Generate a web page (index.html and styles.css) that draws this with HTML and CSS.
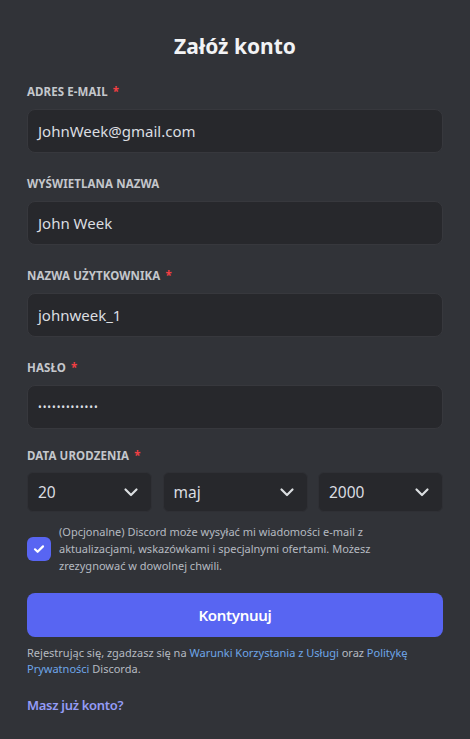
FILE: index.html
```html
<!DOCTYPE html>
<html lang="pl">
<head>
<meta charset="utf-8">
<title>Załóż konto</title>
<link rel="stylesheet" href="styles.css">
</head>
<body>
<main class="form">
  <h1 class="title">Załóż konto</h1>

  <div class="field">
    <label class="label">Adres e-mail <span class="req">*</span></label>
    <div class="input">JohnWeek@gmail.com</div>
  </div>

  <div class="field">
    <label class="label">Wyświetlana nazwa</label>
    <div class="input">John Week</div>
  </div>

  <div class="field">
    <label class="label">Nazwa użytkownika <span class="req">*</span></label>
    <div class="input">johnweek_1</div>
  </div>

  <div class="field field-last">
    <label class="label">Hasło <span class="req">*</span></label>
    <div class="input"><span class="dots">•••••••••••••</span></div>
  </div>

  <div class="field-date">
    <label class="label">Data urodzenia <span class="req">*</span></label>
    <div class="selects">
      <div class="select s-day"><span>20</span>
        <svg class="chev" width="16" height="16" viewBox="0 0 16 16"><path d="M2.5 5.5L8 11l5.5-5.5" fill="none" stroke="currentColor" stroke-width="2.2" stroke-linecap="round" stroke-linejoin="round"/></svg>
      </div>
      <div class="select s-month"><span>maj</span>
        <svg class="chev" width="16" height="16" viewBox="0 0 16 16"><path d="M2.5 5.5L8 11l5.5-5.5" fill="none" stroke="currentColor" stroke-width="2.2" stroke-linecap="round" stroke-linejoin="round"/></svg>
      </div>
      <div class="select s-year"><span>2000</span>
        <svg class="chev" width="16" height="16" viewBox="0 0 16 16"><path d="M2.5 5.5L8 11l5.5-5.5" fill="none" stroke="currentColor" stroke-width="2.2" stroke-linecap="round" stroke-linejoin="round"/></svg>
      </div>
    </div>
  </div>

  <div class="check-row">
    <div class="checkbox">
      <svg width="14" height="14" viewBox="0 0 14 14"><path d="M3 7.3l2.6 2.5L11 4.4" fill="none" stroke="#fff" stroke-width="2.2" stroke-linecap="round" stroke-linejoin="round"/></svg>
    </div>
    <p class="check-text">(Opcjonalne) Discord może wysyłać mi wiadomości e-mail z aktualizacjami, wskazówkami i specjalnymi ofertami. Możesz zrezygnować w dowolnej chwili.</p>
  </div>

  <button class="btn" type="button">Kontynuuj</button>

  <p class="terms">Rejestrując się, zgadzasz się na <a href="#">Warunki Korzystania z Usługi</a> oraz <a href="#">Politykę</a> <a href="#">Prywatności</a> Discorda.</p>

  <a class="login" href="#">Masz już konto?</a>
</main>
</body>
</html>
```

FILE: styles.css
```css
* { box-sizing: border-box; }

html, body {
  margin: 0;
  padding: 0;
  background: #313338;
}

body {
  font-family: "Noto Sans", "Open Sans", sans-serif;
  color: #dbdee1;
}

.form {
  padding: 31px 27px 0;
  display: flex;
  flex-direction: column;
}

.title {
  margin: 0 0 23px;
  font-size: 21px;
  line-height: 30px;
  font-weight: 700;
  color: #f2f3f5;
  text-align: center;
}

.field {
  display: flex;
  flex-direction: column;
  margin-bottom: 23px;
}

.field-last {
  margin-bottom: 19px;
}

.label {
  display: block;
  font-size: 11.5px;
  line-height: 16px;
  font-weight: 700;
  text-transform: uppercase;
  color: #c4c7cc;
  margin-bottom: 9px;
  letter-spacing: 0.1px;
}

.field-date .label {
  margin-bottom: 8px;
}

.req {
  color: #f23f43;
  padding-left: 2px;
}

.input {
  height: 44px;
  border-radius: 8px;
  background: #27282c;
  border: 1px solid #37383d;
  padding: 0 10px;
  display: flex;
  align-items: center;
  font-size: 15px;
  color: #dbdee1;
}

.dots {
  font-size: 10px;
  letter-spacing: 0.9px;
}

.selects {
  display: flex;
  justify-content: space-between;
}

.select {
  height: 40px;
  border-radius: 6px;
  background: #27282c;
  border: 1px solid #2f3035;
  padding: 0 12px 0 10px;
  display: flex;
  align-items: center;
  justify-content: space-between;
  font-size: 15.5px;
  color: #dbdee1;
}

.s-day { width: 125px; }
.s-month { width: 145px; }
.s-year { width: 125px; }

.chev {
  color: #dbdee1;
}

.check-row {
  display: flex;
  align-items: center;
  gap: 8px;
  margin-top: 11px;
}

.checkbox {
  flex: none;
  width: 24px;
  height: 24px;
  border-radius: 6px;
  background: #5865f2;
  display: flex;
  align-items: center;
  justify-content: center;
}

.check-text {
  margin: 0;
  max-width: 316px;
  font-size: 11px;
  line-height: 17px;
  color: #b5bac1;
}

.btn {
  margin-top: 19px;
  height: 44px;
  border: none;
  border-radius: 8px;
  background: #5865f2;
  color: #fff;
  font-family: inherit;
  font-size: 15px;
  font-weight: 600;
  letter-spacing: -0.3px;
}

.terms {
  margin: 8px 0 0;
  font-size: 11px;
  line-height: 16px;
  color: #b5bac1;
}

.terms a {
  color: #6ea6e8;
  text-decoration: none;
}

.login {
  margin-top: 19px;
  align-self: flex-start;
  font-size: 13px;
  line-height: 18px;
  font-weight: 600;
  letter-spacing: -0.3px;
  color: #949cf7;
  text-decoration: none;
}
```
